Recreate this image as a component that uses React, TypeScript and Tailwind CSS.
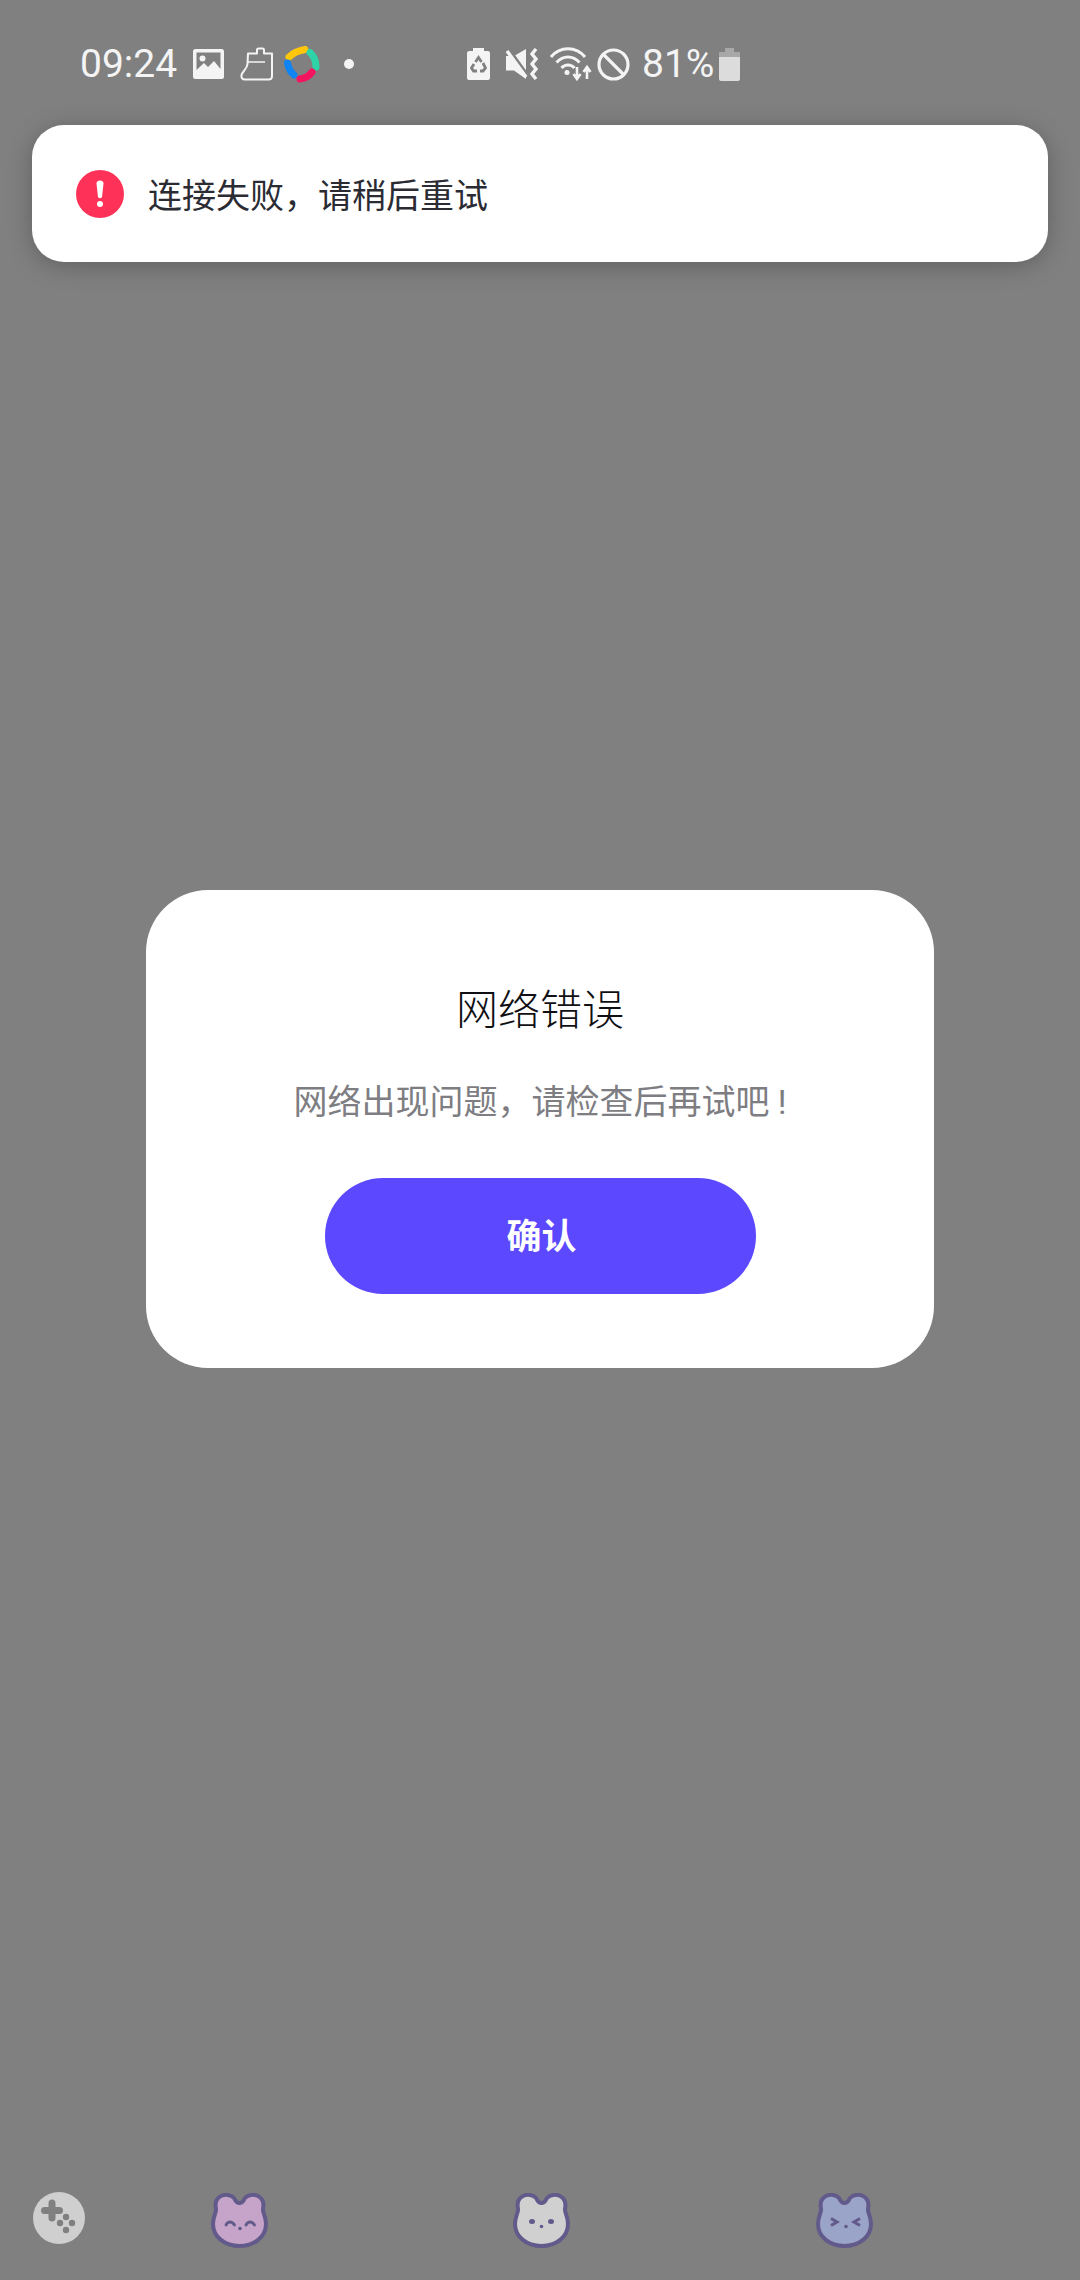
import React from "react";

const cjk = "font-['Roboto','Noto_Sans_CJK_SC',sans-serif]";

function Bear({ fill, face }: { fill: string; face: React.ReactNode }) {
  return (
    <svg width="57" height="55" viewBox="0 0 57 55" fill="none">
      <path
        d="M28.5 10C25 10 25 8 23 5C20 1.5 14 1 10 3C5 5.5 4 11 5 16C5.5 19 2 24 2 31C2 44 14 53 28.5 53C43 53 55 44 55 31C55 24 51.5 19 52 16C53 11 52 5.5 47 3C43 1 37 1.5 34 5C32 8 32 10 28.5 10Z"
        fill={fill}
        stroke="#625a8a"
        strokeWidth="4"
      />
      {face}
    </svg>
  );
}

const ink = "#625a8a";

export default function App() {
  return (
    <div className={`flex h-[2280px] w-[1080px] flex-col overflow-hidden bg-[#808080] ${cjk}`}>
      {/* status bar */}
      <div className="flex h-[125px] items-center pt-[3px] pl-[80px] text-[39px] text-[#f4f4f4]">
        <span className="w-[97px] leading-none font-['Roboto'] whitespace-nowrap">09:24</span>
        <svg className="ml-[16px]" width="31" height="30" viewBox="0 0 31 30">
          <rect width="31" height="30" rx="2.5" fill="#f4f4f4" />
          <path d="M3.5 3.5H27.5V20L21 12L15 18L11 14L3.5 21Z" fill="#808080" />
          <circle cx="9.5" cy="9.5" r="3" fill="#f4f4f4" />
        </svg>
        <svg className="ml-[16px]" width="34" height="34" viewBox="0 0 34 34" fill="none" stroke="#f4f4f4" strokeWidth="2" strokeLinejoin="round">
          <path d="M8 6.5H17V3Q17 1.5 18.500 1.500H22.500Q24 1.500 24 3V6.500H32V29Q32 32.500 28.500 32.500H5Q1 32.500 1.500 28C3 24 7 22 7.500 17Z" />
          <path d="M8 15H25" strokeWidth="1.5" />
        </svg>
        <svg className="ml-[10px]" width="36" height="37" viewBox="0 0 36 37" fill="none" strokeWidth="7" strokeLinecap="round">
          <path d="M5 11Q11 5 21 3.5" stroke="#ffc60a" />
          <path d="M26 6.500Q32 12 32 21" stroke="#2ed3a8" />
          <path d="M3.500 17Q5 25 10 29" stroke="#0f84f2" />
          <path d="M16 33Q24 32 28 26" stroke="#f5145f" />
        </svg>
        <div className="ml-[24px] h-[10px] w-[10px] rounded-full bg-[#f4f4f4]" />

        <svg className="ml-[113px]" width="23" height="32" viewBox="0 0 23 32">
          <path d="M6 0H17V3H21C22 3 23 4 23 5V30C23 31 22 32 21 32H2C1 32 0 31 0 30V5C0 4 1 3 2 3H6Z" fill="#f4f4f4" />
          <g fill="none" stroke="#808080" strokeWidth="2.8">
            <path d="M8.5 14L11.5 9.5L14.5 14" />
            <path d="M16 15L18.5 20L16 23H13" />
            <path d="M10 23H6.5L4.5 20L7 16" />
          </g>
        </svg>
        <svg className="ml-[16px]" width="32" height="32" viewBox="0 0 32 32">
          <path d="M0 8H8L20 1V31L8 22.5H0Z" fill="#f4f4f4" />
          <path d="M3 1L23 29" stroke="#808080" strokeWidth="3" />
          <path d="M1 3L20 29" stroke="#f4f4f4" strokeWidth="3.5" />
          <path d="M30 1L26 6L30 11L26 16L30 21L26 26L30 31" fill="none" stroke="#f4f4f4" strokeWidth="3.4" />
        </svg>
        <svg className="ml-[12px]" width="42" height="34" viewBox="0 0 42 34" fill="none" stroke="#f4f4f4">
          <path d="M1 10C10 -1 26 -1 35 10" strokeWidth="3" />
          <path d="M6.5 15.5C13 8 23 8 29.5 15.5" strokeWidth="3" />
          <path d="M11.5 21C15 17 21 17 24.5 21" strokeWidth="3" />
          <circle cx="17" cy="25.5" r="2.5" fill="#f4f4f4" stroke="none" />
          <path d="M27 20V30M23.5 27L27 32L30.5 27" strokeWidth="2.6" />
          <path d="M37 32V22M33.5 25L37 20L40.5 25" strokeWidth="2.6" />
        </svg>
        <svg className="ml-[5px]" width="33" height="33" viewBox="0 0 33 33" fill="none" stroke="#f4f4f4" strokeWidth="3.2">
          <circle cx="16.5" cy="16.5" r="14.5" />
          <path d="M6.5 6.5L26.5 26.5" />
        </svg>
        <span className="ml-[12px] w-[71px] leading-none font-['Roboto'] whitespace-nowrap">81%</span>
        <svg className="ml-[6px]" width="21" height="33" viewBox="0 0 21 33">
          <path d="M6 0H15V4.5H6Z" fill="#a8a8a8" />
          <rect x="0" y="4" width="21" height="5" rx="1" fill="#a8a8a8" />
          <path d="M0 9H21V31C21 32 20 33 19 33H2C1 33 0 32 0 31Z" fill="#dcdcdc" />
        </svg>
      </div>

      {/* toast */}
      <div className="mx-[32px] flex h-[137px] items-center rounded-[32px] bg-white pl-[44px] shadow-[0_4px_24px_rgba(0,0,0,0.25)]">
        <svg width="48" height="48" viewBox="0 0 48 48">
          <circle cx="24" cy="24" r="24" fill="#fe3259" />
          <path d="M20.5 13.5C20.5 11.5 22 10.5 24 10.5C26 10.5 27.5 11.5 27.5 13.5L26 27C25.8 28.5 22.2 28.5 22 27Z" fill="#fff" />
          <circle cx="24" cy="34" r="3" fill="#fff" />
        </svg>
        <span className="mt-[4px] ml-[24px] text-[34px] leading-none text-[#2b2b33]">连接失败，请稍后重试</span>
      </div>

      {/* dialog */}
      <div className="mx-auto mt-[628px] flex h-[478px] w-[788px] flex-col items-center rounded-[62px] bg-white">
        <div className="mt-[94px] text-[42px] leading-[54px] font-light text-[#101014]">网络错误</div>
        <div className="mt-[40px] text-[34px] leading-[48px] text-[#7d7d82]">网络出现问题，请检查后再试吧 !</div>
        <button className="mt-[52px] ml-[1px] flex h-[116px] w-[431px] items-center justify-center rounded-full bg-[#5b48ff] pt-[5px] pl-[2px] text-[35px] font-bold text-white">
          确认
        </button>
      </div>

      {/* bottom bar */}
      <div className="mt-auto mb-[32px] flex items-start">
        <svg className="mt-[-1px] ml-[33px]" width="52" height="52" viewBox="0 0 52 52">
          <circle cx="26" cy="26" r="26" fill="#cfcfcf" />
          <path d="M19 11V26M11.500 18.5H26.500" stroke="#808080" strokeWidth="7" strokeLinecap="round" />
          <circle cx="33" cy="25" r="3.2" fill="#808080" />
          <circle cx="27" cy="31" r="3.2" fill="#808080" />
          <circle cx="39" cy="31" r="3.2" fill="#808080" />
          <circle cx="33" cy="38" r="3.2" fill="#808080" />
        </svg>
        <div className="ml-[126px]">
          <Bear
            fill="#c6a3c9"
            face={
              <>
                <path d="M15 32C17 28 21 28 23.5 32" fill="none" stroke={ink} strokeWidth="2.8" strokeLinecap="round" />
                <path d="M35 32C37 28 41 28 43.5 32" fill="none" stroke={ink} strokeWidth="2.8" strokeLinecap="round" />
                <circle cx="29" cy="35.5" r="1.8" fill={ink} />
              </>
            }
          />
        </div>
        <div className="ml-[245px]">
          <Bear
            fill="#d0d0d0"
            face={
              <>
                <ellipse cx="19" cy="28.5" rx="3" ry="2.5" fill={ink} />
                <ellipse cx="38" cy="28.5" rx="3" ry="2.5" fill={ink} />
                <circle cx="28.5" cy="33.5" r="1.8" fill={ink} />
              </>
            }
          />
        </div>
        <div className="ml-[246px]">
          <Bear
            fill="#9aa3c8"
            face={
              <>
                <path d="M15 25.5L21 29L15 32.5" fill="none" stroke={ink} strokeWidth="3" />
                <path d="M44 25.5L38 29L44 32.5" fill="none" stroke={ink} strokeWidth="3" />
                <circle cx="30" cy="33.5" r="1.8" fill={ink} />
              </>
            }
          />
        </div>
      </div>
    </div>
  );
}
